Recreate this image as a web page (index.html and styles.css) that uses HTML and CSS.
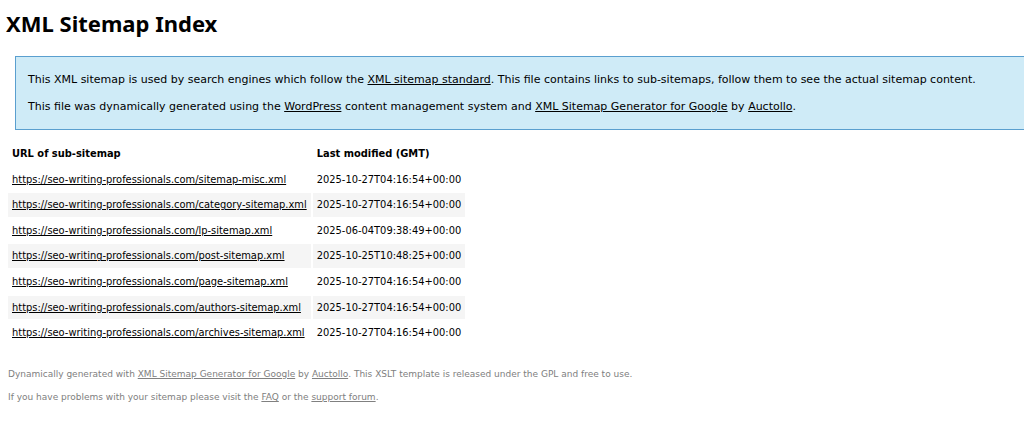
FILE: index.html
```html
<!DOCTYPE html>
<html>
<head>
<meta charset="utf-8">
<title>XML Sitemap</title>
<link rel="stylesheet" href="styles.css">
</head>
<body>
<h1 class="title">XML Sitemap Index</h1>
<div class="intro">
<p>This XML sitemap is used by search engines which follow the <a href="#">XML sitemap standard</a>. This file contains links to sub-sitemaps, follow them to see the actual sitemap content.</p>
<p>This file was dynamically generated using the <a href="#">WordPress</a> content management system and <a href="#">XML Sitemap Generator for Google</a> by <a href="#">Auctollo</a>.</p>
</div>
<table class="maps">
<tr><th class="col-url">URL of sub-sitemap</th><th>Last modified (GMT)</th></tr>
<tr><td><a href="#">https://seo-writing-professionals.com/sitemap-misc.xml</a></td><td>2025-10-27T04:16:54+00:00</td></tr>
<tr class="high"><td><a href="#">https://seo-writing-professionals.com/category-sitemap.xml</a></td><td>2025-10-27T04:16:54+00:00</td></tr>
<tr><td><a href="#">https://seo-writing-professionals.com/lp-sitemap.xml</a></td><td>2025-06-04T09:38:49+00:00</td></tr>
<tr class="high"><td><a href="#">https://seo-writing-professionals.com/post-sitemap.xml</a></td><td>2025-10-25T10:48:25+00:00</td></tr>
<tr><td><a href="#">https://seo-writing-professionals.com/page-sitemap.xml</a></td><td>2025-10-27T04:16:54+00:00</td></tr>
<tr class="high"><td><a href="#">https://seo-writing-professionals.com/authors-sitemap.xml</a></td><td>2025-10-27T04:16:54+00:00</td></tr>
<tr><td><a href="#">https://seo-writing-professionals.com/archives-sitemap.xml</a></td><td>2025-10-27T04:16:54+00:00</td></tr>
</table>
<div class="footer">
<p>Dynamically generated with <a href="#">XML Sitemap Generator for Google</a> by <a href="#">Auctollo</a>. This XSLT template is released under the GPL and free to use.</p>
<p>If you have problems with your sitemap please visit the <a href="#">FAQ</a> or the <a href="#">support forum</a>.</p>
</div>
</body>
</html>
```
FILE: styles.css
```css
html, body {
  overflow: hidden;
}
body {
  margin: 0;
  padding: 0 6px;
  font-family: "DejaVu Sans", Verdana, sans-serif;
  font-size: 11px;
  color: #000;
  background: #fff;
}
a {
  color: #000;
}
.title {
  font-family: "Noto Sans", "DejaVu Sans", sans-serif;
  font-size: 22px;
  font-weight: bold;
  margin: 8px 0 0 0;
  line-height: 30px;
}
.intro {
  background: #cfebf7;
  border: 1px solid #5a9fcf;
  padding: 4px 12px;
  margin: 18px -40px 0 9px;
}
.intro p {
  margin: 10px 0;
  line-height: 17px;
}
.maps {
  border-spacing: 2px;
  margin-top: 10px;
}
.maps th {
  text-align: left;
  font-size: 9.9px;
  padding: 6px 24px 6px 4px;
  line-height: 11.6px;
}
.maps td {
  font-size: 9.9px;
  padding: 6px 4px;
  line-height: 11.6px;
}
.maps tr.high td {
  background: #f5f5f5;
}
.footer {
  margin-top: 22px;
  font-size: 9px;
  color: #808080;
  padding: 0 2px;
}
.footer a {
  color: #808080;
}
.footer p {
  margin: 0 0 13px 0;
}
```
